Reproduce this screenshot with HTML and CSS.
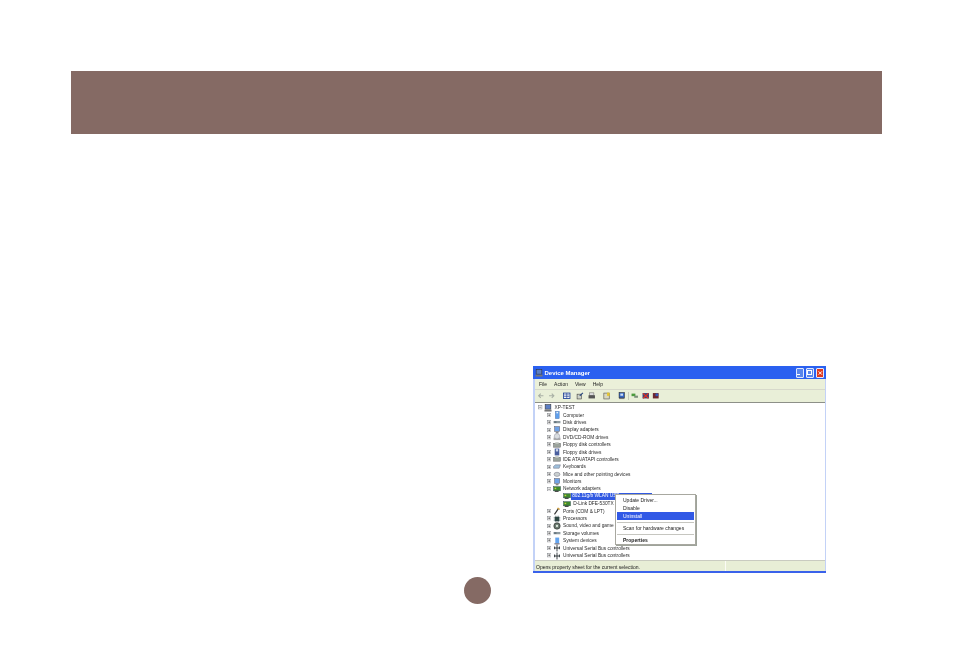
FILE: index.html
```html
<!DOCTYPE html>
<html lang="en">
<head>
<meta charset="utf-8">
<title>Device Manager</title>
<link rel="stylesheet" href="styles.css">
</head>
<body>
<svg class="defs" width="0" height="0" aria-hidden="true">
  <defs>
    <symbol id="exp" viewBox="0 0 5 5"><rect x=".5" y=".5" width="4" height="4" fill="#fff" stroke="#8c8f94" stroke-width=".7"/><path d="M1.3 2.5h2.4M2.5 1.3v2.4" stroke="#333" stroke-width=".6"/></symbol>
    <symbol id="col" viewBox="0 0 5 5"><rect x=".5" y=".5" width="4" height="4" fill="#fff" stroke="#8c8f94" stroke-width=".7"/><path d="M1.3 2.5h2.4" stroke="#333" stroke-width=".6"/></symbol>
    <symbol id="pc" viewBox="0 0 7 7"><rect x="1" y=".5" width="5" height="4" fill="#5c7fc4" stroke="#333" stroke-width=".5"/><rect x=".4" y="5" width="6.2" height="1.6" fill="#777"/></symbol>
    <symbol id="tower" viewBox="0 0 7 7"><rect x="2" y=".3" width="3.4" height="6.4" fill="#5fa0ee" stroke="#5577aa" stroke-width=".4"/><rect x="3" y="1" width="1.5" height="1" fill="#fff"/></symbol>
    <symbol id="disk" viewBox="0 0 7 7"><rect x=".5" y="2.6" width="6" height="2" fill="#8d9aa0"/><rect x="1" y="3.2" width="2" height=".7" fill="#3a4a55"/></symbol>
    <symbol id="monitor" viewBox="0 0 7 7"><rect x="1.4" y=".5" width="4.4" height="4.2" fill="#6fa2e6" stroke="#667" stroke-width=".5"/><rect x="2.4" y="5" width="2.4" height="1.4" fill="#888"/></symbol>
    <symbol id="cd" viewBox="0 0 7 7"><rect x=".5" y="4" width="6" height="2.2" fill="#aaa"/><circle cx="3.5" cy="2.8" r="2.4" fill="#d9dde0" stroke="#889" stroke-width=".4"/></symbol>
    <symbol id="floppy" viewBox="0 0 7 7"><rect x=".5" y="2" width="6" height="3.4" fill="#9ba39c" stroke="#555" stroke-width=".4"/><rect x="2" y="1" width="3" height="1.5" fill="#c4c9c4"/></symbol>
    <symbol id="fdrive" viewBox="0 0 7 7"><rect x="1.5" y=".5" width="4" height="6" fill="#4a5f9e"/><rect x="2.5" y="1" width="2" height="2" fill="#cfd8ea"/></symbol>
    <symbol id="kbd" viewBox="0 0 7 7"><path d="M.5 3l1.5-1.4h4.5L5.4 4.6H.5z" fill="#9fc0dc" stroke="#667" stroke-width=".4"/></symbol>
    <symbol id="mouse" viewBox="0 0 7 7"><ellipse cx="3.5" cy="3.8" rx="2.6" ry="1.8" fill="#c9cfd0" stroke="#667" stroke-width=".4"/></symbol>
    <symbol id="net" viewBox="0 0 7 7"><rect x=".5" y="1.5" width="6" height="3.6" fill="#3f8a2d" stroke="#244" stroke-width=".4"/><rect x="1.5" y="5" width="3.4" height="1" fill="#333"/><rect x="1.4" y="2.4" width="1.4" height="1.2" fill="#c9d040"/></symbol>
    <symbol id="port" viewBox="0 0 7 7"><path d="M1.3 6.5L5 1" stroke="#333" stroke-width="1"/><path d="M4.3.4l2 1.4-1 .9-1.8-1.3z" fill="#d6a544"/></symbol>
    <symbol id="cpu" viewBox="0 0 7 7"><rect x="1.5" y="1.5" width="4" height="4" fill="#2e4a3a"/><path d="M.5 2.5h6M.5 4.5h6M2.5.5v6M4.5.5v6" stroke="#345" stroke-width=".4"/></symbol>
    <symbol id="sound" viewBox="0 0 7 7"><circle cx="3.5" cy="3.5" r="2.8" fill="#6a7a70" stroke="#222" stroke-width=".5"/><circle cx="3.5" cy="3.5" r="1" fill="#dfe8df"/></symbol>
    <symbol id="sys" viewBox="0 0 7 7"><rect x="2" y=".5" width="3.4" height="5" fill="#63a4ef"/><rect x="1.2" y="5.4" width="4.6" height="1.1" fill="#778"/></symbol>
    <symbol id="usb" viewBox="0 0 7 7"><path d="M3.5.5v6M1 3.5h5M1.4 2.2v2.4M5.6 2.2v2.4" stroke="#2c3338" stroke-width=".8" fill="none"/></symbol>
  </defs>
</svg>

<header class="banner"></header>

<main class="content">
  <section class="window">
    <div class="titlebar">
      <svg class="ticon" viewBox="0 0 7 7"><use href="#pc"/></svg>
      <span class="title">Device Manager</span>
      <span class="wbtns">
        <span class="wbtn"><i class="glyph-min"></i></span>
        <span class="wbtn"><i class="glyph-max"></i></span>
        <span class="wbtn close"><svg viewBox="0 0 8 8"><path d="M2 2l4 4M6 2l-4 4" stroke="#fff" stroke-width="1.2"/></svg></span>
      </span>
    </div>
    <nav class="menubar">
      <span>File</span><span>Action</span><span>View</span><span>Help</span>
    </nav>
    <div class="toolbar">
      <svg class="tb arrow" viewBox="0 0 7 7"><path d="M6 3.5H1.5M3.5 1.5l-2 2 2 2" stroke="#a9b0a5" fill="none"/></svg>
      <svg class="tb arrow" viewBox="0 0 7 7"><path d="M1 3.5h4.5M3.5 1.5l2 2-2 2" stroke="#a9b0a5" fill="none"/></svg>
      <svg class="tb sp1" viewBox="0 0 7 7"><rect x=".5" y="1" width="6" height="5" fill="#fff" stroke="#1c3f95" stroke-width=".8"/><path d="M1 2.7h5M1 4.3h5M3.5 1v5" stroke="#1c3f95" stroke-width=".6"/></svg>
      <svg class="tb sp2" viewBox="0 0 7 7"><rect x="1" y="2" width="4" height="4.5" fill="#cdd2c6" stroke="#333" stroke-width=".5"/><path d="M3.5 3.5L6.5.8" stroke="#26457f"/></svg>
      <svg class="tb sp3" viewBox="0 0 7 7"><rect x="1.5" y=".8" width="4" height="2.5" fill="#ddd" stroke="#555" stroke-width=".4"/><rect x=".5" y="3" width="6" height="3" fill="#555"/></svg>
      <svg class="tb sp4" viewBox="0 0 7 7"><rect x=".8" y="1" width="5" height="5.5" fill="#d9d9c0" stroke="#444" stroke-width=".5"/><path d="M3.8.6h2.4v3H3.8z" fill="#e6c52d"/></svg>
      <svg class="tb sp5" viewBox="0 0 7 7"><rect x="1" y=".5" width="5" height="5" fill="#3465c5" stroke="#222" stroke-width=".5"/><rect x="2.2" y="1.5" width="2.5" height="2" fill="#cfe0f0"/><rect x="1" y="5.6" width="5" height="1" fill="#777"/></svg>
      <i class="tbsep"></i>
      <svg class="tb" viewBox="0 0 7 7"><rect x=".5" y="1.5" width="3.6" height="2.4" fill="#4a9b3c"/><rect x="3" y="3.4" width="3.5" height="2" fill="#7b8f7a"/></svg>
      <svg class="tb" viewBox="0 0 7 7"><rect x=".5" y="1" width="6" height="5" fill="#38457a"/><path d="M1 1.3l5 4.5M6 1.3l-5 4.5" stroke="#e03020" stroke-width="1.2"/></svg>
      <svg class="tb sp6" viewBox="0 0 7 7"><rect x=".8" y="1" width="5.4" height="5" fill="#6b2630"/><circle cx="4.5" cy="2.6" r="1.4" fill="#3557b4"/></svg>
    </div>
    <div class="treepane">
      <ul class="tree">
        <li class="root"><svg class="ex" viewBox="0 0 5 5"><use href="#col"/></svg><svg class="ic" viewBox="0 0 7 7"><use href="#pc"/></svg><span>XP-TEST</span></li>
        <li><svg class="ex" viewBox="0 0 5 5"><use href="#exp"/></svg><svg class="ic" viewBox="0 0 7 7"><use href="#tower"/></svg><span>Computer</span></li>
        <li><svg class="ex" viewBox="0 0 5 5"><use href="#exp"/></svg><svg class="ic" viewBox="0 0 7 7"><use href="#disk"/></svg><span>Disk drives</span></li>
        <li><svg class="ex" viewBox="0 0 5 5"><use href="#exp"/></svg><svg class="ic" viewBox="0 0 7 7"><use href="#monitor"/></svg><span>Display adapters</span></li>
        <li><svg class="ex" viewBox="0 0 5 5"><use href="#exp"/></svg><svg class="ic" viewBox="0 0 7 7"><use href="#cd"/></svg><span>DVD/CD-ROM drives</span></li>
        <li><svg class="ex" viewBox="0 0 5 5"><use href="#exp"/></svg><svg class="ic" viewBox="0 0 7 7"><use href="#floppy"/></svg><span>Floppy disk controllers</span></li>
        <li><svg class="ex" viewBox="0 0 5 5"><use href="#exp"/></svg><svg class="ic" viewBox="0 0 7 7"><use href="#fdrive"/></svg><span>Floppy disk drives</span></li>
        <li><svg class="ex" viewBox="0 0 5 5"><use href="#exp"/></svg><svg class="ic" viewBox="0 0 7 7"><use href="#floppy"/></svg><span>IDE ATA/ATAPI controllers</span></li>
        <li><svg class="ex" viewBox="0 0 5 5"><use href="#exp"/></svg><svg class="ic" viewBox="0 0 7 7"><use href="#kbd"/></svg><span>Keyboards</span></li>
        <li><svg class="ex" viewBox="0 0 5 5"><use href="#exp"/></svg><svg class="ic" viewBox="0 0 7 7"><use href="#mouse"/></svg><span>Mice and other pointing devices</span></li>
        <li><svg class="ex" viewBox="0 0 5 5"><use href="#exp"/></svg><svg class="ic" viewBox="0 0 7 7"><use href="#monitor"/></svg><span>Monitors</span></li>
        <li><svg class="ex" viewBox="0 0 5 5"><use href="#col"/></svg><svg class="ic" viewBox="0 0 7 7"><use href="#net"/></svg><span>Network adapters</span></li>
        <li class="leaf"><svg class="ic" viewBox="0 0 7 7"><use href="#net"/></svg><span class="selected">802.11g/b WLAN USB</span></li>
        <li class="leaf"><svg class="ic" viewBox="0 0 7 7"><use href="#net"/></svg><span>D-Link DFE-530TX PCI</span></li>
        <li><svg class="ex" viewBox="0 0 5 5"><use href="#exp"/></svg><svg class="ic" viewBox="0 0 7 7"><use href="#port"/></svg><span>Ports (COM &amp; LPT)</span></li>
        <li><svg class="ex" viewBox="0 0 5 5"><use href="#exp"/></svg><svg class="ic" viewBox="0 0 7 7"><use href="#cpu"/></svg><span>Processors</span></li>
        <li><svg class="ex" viewBox="0 0 5 5"><use href="#exp"/></svg><svg class="ic" viewBox="0 0 7 7"><use href="#sound"/></svg><span>Sound, video and game</span></li>
        <li><svg class="ex" viewBox="0 0 5 5"><use href="#exp"/></svg><svg class="ic" viewBox="0 0 7 7"><use href="#disk"/></svg><span>Storage volumes</span></li>
        <li><svg class="ex" viewBox="0 0 5 5"><use href="#exp"/></svg><svg class="ic" viewBox="0 0 7 7"><use href="#sys"/></svg><span>System devices</span></li>
        <li><svg class="ex" viewBox="0 0 5 5"><use href="#exp"/></svg><svg class="ic" viewBox="0 0 7 7"><use href="#usb"/></svg><span>Universal Serial Bus controllers</span></li>
        <li><svg class="ex" viewBox="0 0 5 5"><use href="#exp"/></svg><svg class="ic" viewBox="0 0 7 7"><use href="#usb"/></svg><span>Universal Serial Bus controllers</span></li>
      </ul>
      <div class="ctxmenu">
        <div class="mi">Update Driver...</div>
        <div class="mi">Disable</div>
        <div class="mi active">Uninstall</div>
        <hr>
        <div class="mi">Scan for hardware changes</div>
        <hr>
        <div class="mi strong">Properties</div>
      </div>
    </div>
    <footer class="statusbar">
      <span class="st-main">Opens property sheet for the current selection.</span>
      <span class="st-cell"></span>
    </footer>
  </section>
  <div class="page-dot"></div>
</main>
</body>
</html>
```

FILE: styles.css
```css
html, body {
  margin: 0;
  padding: 0;
  background: #fff;
}
body {
  width: 954px;
  height: 664px;
  overflow: hidden;
  font-family: "Liberation Sans", Arial, sans-serif;
  padding-top: 71px;
  box-sizing: border-box;
}
.defs { display: block; height: 0; }

.banner {
  height: 63px;
  width: 811px;
  margin-left: 71px;
  background: #856a64;
}

.content {
  display: flex;
  flex-direction: column;
  padding-top: 232px;
}

.window {
  width: 293px;
  height: 207px;
  margin-left: 533px;
  display: flex;
  flex-direction: column;
  background: #c3d2f7;
  box-sizing: border-box;
  padding: 0 1.5px 0 2px;
  border-bottom: 2px solid #3a62ea;
  filter: blur(0.4px);
}

.titlebar {
  height: 13px;
  flex: none;
  margin: 0 -1.5px 0 -2px;
  display: flex;
  align-items: center;
  padding: 0 2px;
  background: #2a60f0;
  color: #fff;
  font-size: 6px;
  font-weight: bold;
}
.ticon { width: 8px; height: 8px; margin-right: 1.5px; }
.title { flex: 1; }
.wbtns { display: flex; gap: 1.5px; }
.wbtn {
  width: 8.5px;
  height: 10px;
  border: 0.5px solid #dfe8ff;
  border-radius: 1px;
  background: #5a86ea;
  box-sizing: border-box;
  display: flex;
  align-items: flex-end;
  justify-content: center;
}
.wbtn.close { background: #df3a1e; align-items: center; }
.wbtn.close svg { width: 8px; height: 8px; }
.glyph-min { display: block; width: 3px; height: 1px; background: #fff; margin: 0 2px 1.5px 0; }
.glyph-max { display: block; width: 5px; height: 5px; border: 0.8px solid #fff; box-sizing: border-box; margin-bottom: 2px; }

.menubar {
  height: 11px;
  flex: none;
  display: flex;
  align-items: center;
  gap: 7px;
  padding-left: 4px;
  background: #ebf0d9;
  border-bottom: 1px solid #d7d9cb;
  box-sizing: border-box;
  font-size: 5px;
  color: #222;
}

.toolbar {
  height: 13px;
  flex: none;
  display: flex;
  align-items: center;
  gap: 3.5px;
  padding-left: 2px;
  background: #e9efd8;
  border-bottom: 1px solid #8d9088;
  box-sizing: border-box;
}
.tb { width: 7.5px; height: 7.5px; flex: none; }
.tb.sp1 { margin-left: 4px; }
.tb.sp2 { margin-left: 2px; }
.tb.sp3 { margin-left: 1px; }
.tb.sp4 { margin-left: 4px; }
.tb.sp5 { margin-left: 4px; }
.tb.sp6 { margin-left: -1px; }
.tbsep { width: 1px; height: 8px; background: #c5c8b8; margin: 0 -1.25px; flex: none; }

.treepane {
  flex: 1;
  position: relative;
  background: #fff;
  min-height: 0;
}

.tree {
  list-style: none;
  margin: 0;
  padding: 1px 0 0 5px;
  font-size: 4.8px;
  color: #2a2a2a;
}
.tree li {
  height: 7.4px;
  display: flex;
  align-items: center;
  padding-left: 6.5px;
  white-space: nowrap;
}
.tree li.root { padding-left: 0; margin-left: -2px; }
.tree li.leaf { padding-left: 22.7px; }
.ex { width: 4.5px; height: 4.5px; flex: none; margin-right: 1.5px; }
.ic { width: 8px; height: 8px; flex: none; margin-right: 2.5px; }
.selected {
  background: #3159e2;
  color: #fff;
  width: 81px;
  margin-left: -2.5px;
  padding-left: 1.5px;
  box-sizing: border-box;
  line-height: 6.5px;
}

.ctxmenu {
  position: absolute;
  left: 79.5px;
  top: 91px;
  width: 81px;
  height: 51px;
  box-sizing: border-box;
  background: #fff;
  border: 0.5px solid #a8a8a0;
  box-shadow: 1px 1px 0 #9ea39a;
  padding: 1px;
  font-size: 5px;
  color: #222;
}
.mi { height: 8px; line-height: 8px; padding-left: 6.5px; white-space: nowrap; }
.mi.active { background: #3159e6; color: #fff; }
.mi.strong { font-weight: bold; }
.ctxmenu hr {
  border: 0;
  height: 1px;
  margin: 1.5px 0;
  background: #c6c6c0;
}

.statusbar {
  height: 11px;
  flex: none;
  display: flex;
  background: #e8eed6;
  border-top: 1px solid #c9cbc0;
  box-sizing: border-box;
  font-size: 5.05px;
  line-height: 12px;
  color: #222;
  padding-left: 1px;
}
.st-main { width: 189px; border-right: 1px solid #fbfbf5; white-space: nowrap; }
.st-cell { flex: 1; }

.page-dot {
  width: 27px;
  height: 27px;
  border-radius: 50%;
  background: #856a64;
  margin-left: 464px;
  margin-top: 4px;
}
```
